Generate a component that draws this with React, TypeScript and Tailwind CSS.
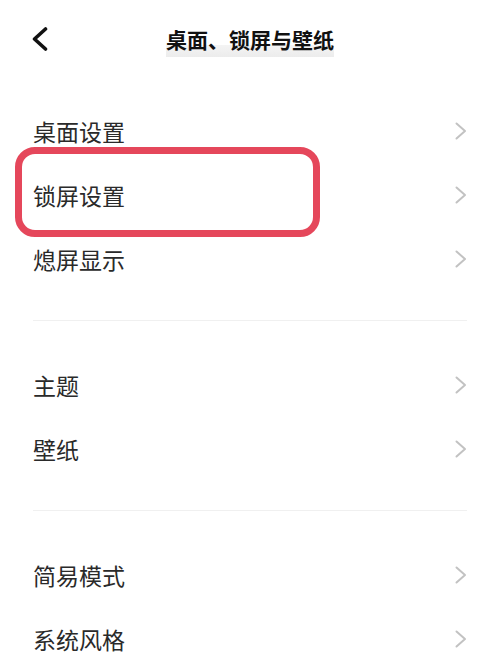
import React from "react";

const groups: string[][] = [
  ["桌面设置", "锁屏设置", "熄屏显示"],
  ["主题", "壁纸"],
  ["简易模式", "系统风格"],
];

function Chevron() {
  return (
    <svg width="14" height="18" viewBox="0 0 14 18" fill="none" className="shrink-0">
      <path d="M2.5 1.5 L11 9 L2.5 16.5" stroke="#c2c2c2" strokeWidth="2" strokeLinecap="round" strokeLinejoin="round" />
    </svg>
  );
}

function BackIcon() {
  return (
    <svg width="18" height="24" viewBox="0 0 18 24" fill="none">
      <path d="M14.5 2 L3.5 12 L14.5 22" stroke="#111" strokeWidth="3.6" strokeLinecap="round" strokeLinejoin="round" />
    </svg>
  );
}

export default function App() {
  return (
    <div
      className="relative w-[500px] h-[652px] overflow-hidden bg-white"
      style={{ fontFamily: '"Noto Sans CJK SC", "Noto Sans", sans-serif' }}
    >
      <div className="grid grid-cols-[1fr_auto_1fr] items-center h-[78px]">
        <div className="pl-[31px] flex items-center">
          <BackIcon />
        </div>
        <div className="relative">
          <div className="absolute left-0 right-0 bottom-[-7px] h-[12px] bg-gradient-to-b from-[#f4f4f4] to-[#ececec]" />
          <h1 className="relative text-[21px] font-bold text-[#111] leading-none">桌面、锁屏与壁纸</h1>
        </div>
        <div />
      </div>

      <div className="pt-[21px]">
        {groups.map((g, gi) => (
          <div key={gi}>
            {gi > 0 && <div className="mx-[33px] h-px bg-[#f0f0f0] mt-[29px] mb-[32px]" />}
            {g.map((label) => (
              <div key={label} className="h-[64px] flex items-center justify-between pl-[33px] pr-[32px]">
                <span className="text-[23px] text-[#2a2a2a] leading-none">{label}</span>
                <Chevron />
              </div>
            ))}
          </div>
        ))}
      </div>

      <div className="absolute left-[15px] top-[147px] w-[305px] h-[90px] border-[7px] border-[#e5475b] rounded-[20px]" />
    </div>
  );
}
